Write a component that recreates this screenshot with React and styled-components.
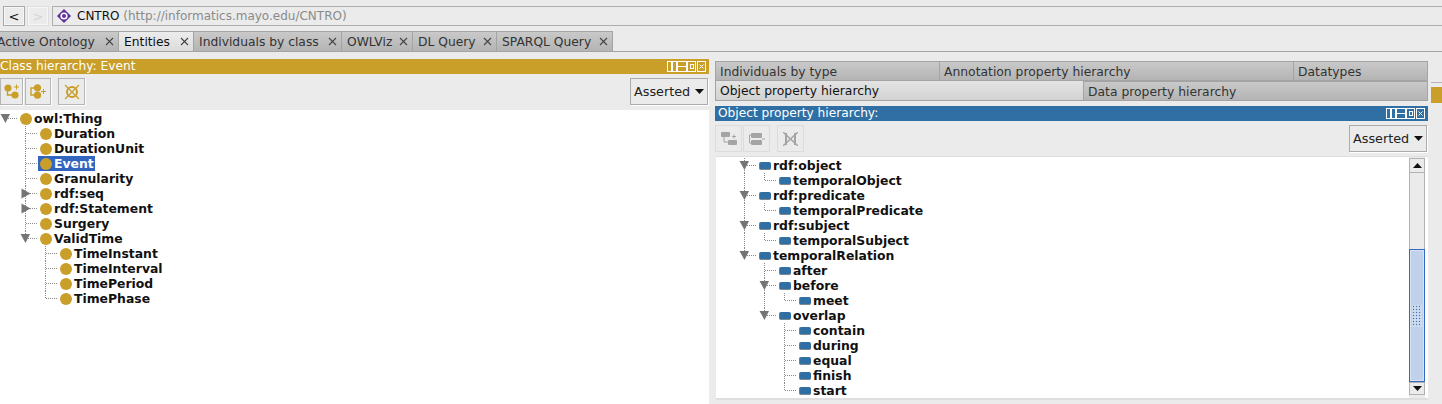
import React from 'react';
import styled, { createGlobalStyle } from 'styled-components';

const GOLD = '#c99e29';
const BLUE = '#2f6fa3';
const FONT = '"DejaVu Sans", sans-serif';

const GlobalStyle = createGlobalStyle`
  html, body {
    margin: 0;
    padding: 0;
    overflow: hidden;
    background: #ebebeb;
  }
`;

const Page = styled.div`
  position: relative;
  width: 1442px;
  height: 404px;
  overflow: hidden;
  background: #ebebeb;
  font-family: ${FONT};
  font-size: 12.3px;
  color: #222;
`;

const NavBar = styled.div`
  display: flex;
  gap: 2px;
  height: 20px;
  padding: 6px 0 5px 3px;
  box-sizing: content-box;
  border-top: 1px solid #dcdcdc;
  margin-top: -1px;
`;

const NavButton = styled.div`
  width: 22px;
  height: 20px;
  box-sizing: border-box;
  border: 1px solid ${p => (p.$disabled ? '#dedede' : '#a9a9a9')};
  box-shadow: inset 0 0 0 1px #f6f6f6;
  display: flex;
  align-items: center;
  justify-content: center;
  font-size: 13px;
  color: ${p => (p.$disabled ? '#d4d4d4' : '#111')};
`;

const AddressBox = styled.div`
  flex: 1;
  margin-left: 1px;
  height: 20px;
  box-sizing: border-box;
  border: 1px solid #aeaeae;
  border-right: none;
  display: flex;
  align-items: center;
  padding-left: 4px;
  gap: 6px;
  font-size: 12px;
  color: #111;
`;

const AddressUrl = styled.span`
  color: #8a8a8a;
`;

const TabBar = styled.div`
  display: flex;
  height: 20px;
  box-sizing: content-box;
  border-bottom: 1px solid #a4a4a4;
  overflow: hidden;
`;

const Tab = styled.div`
  width: ${p => p.$w}px;
  flex: none;
  box-sizing: border-box;
  display: flex;
  align-items: center;
  justify-content: space-between;
  white-space: nowrap;
  padding: 0 4px 0 ${p => (p.$flush ? 0 : 5)}px;
  border: 1px solid #a4a4a4;
  border-left: ${p => (p.$flush ? 'none' : '1px solid #a4a4a4')};
  border-bottom: none;
  margin-left: ${p => (p.$flush ? -3 : 0)}px;
  margin-right: -1px;
  color: ${p => (p.$active ? '#111' : '#333')};
  background: ${p => (p.$active
    ? 'linear-gradient(#ececec, #dcdcdc)'
    : 'linear-gradient(#c9c9c9, #b4b4b4)')};
`;

const Split = styled.div`
  display: grid;
  grid-template-columns: 709px 1fr;
  height: 352px;
`;

const LeftPane = styled.div`
  display: flex;
  flex-direction: column;
  padding-top: 7px;
  min-width: 0;
`;

const RightPane = styled.div`
  display: flex;
  flex-direction: column;
  min-width: 0;
  padding: 9px 14px 7px 6px;
`;

const TabRow = styled.div`
  display: flex;
  flex: none;
  height: 19px;
  box-sizing: content-box;
  border-bottom: 1px solid #a4a4a4;
  margin-bottom: ${p => p.$after || 0}px;
`;

const ViewTab = styled.div`
  flex: none;
  width: ${p => p.$w}px;
  box-sizing: border-box;
  display: flex;
  align-items: center;
  padding: 1px 0 0 4px;
  font-size: 12.35px;
  border-left: 1px solid #a4a4a4;
  border-top: ${p => (p.$active ? 'none' : '1px solid #a4a4a4')};
  border-right: 1px solid #a4a4a4;
  margin-right: -1px;
  color: ${p => (p.$active ? '#111' : '#333')};
  background: ${p => (p.$active
    ? 'linear-gradient(#e4e4e4, #d2d2d2)'
    : 'linear-gradient(#c9c9c9, #b4b4b4)')};
`;

const ViewHeader = styled.div`
  display: flex;
  flex: none;
  align-items: center;
  justify-content: space-between;
  height: 15px;
  padding: 0 3px 0 ${p => p.$inset}px;
  background: ${p => p.$color};
  color: #fff;
  font-size: 12.2px;
  line-height: 17px;
`;

const ViewToolbar = styled.div`
  display: flex;
  flex: none;
  align-items: flex-start;
  height: ${p => p.$h}px;
  padding-top: 4px;
  box-sizing: border-box;
`;

const ToolButton = styled.div`
  width: ${p => p.$w}px;
  height: 27px;
  margin-right: ${p => p.$gap}px;
  box-sizing: border-box;
  border: 1px solid ${p => (p.$disabled ? '#dcdcdc' : '#b5b5b5')};
  box-shadow: 1px 1px 0 ${p => (p.$disabled ? 'transparent' : '#fff')};
  display: flex;
  align-items: center;
  justify-content: center;
`;

const Combo = styled.div`
  margin-left: auto;
  margin-right: 1px;
  width: 78px;
  height: 27px;
  box-sizing: border-box;
  border: 1px solid #ababab;
  box-shadow: 1px 1px 0 #fff;
  display: flex;
  align-items: center;
  justify-content: space-between;
  padding: 0 3px 0 3px;
  font-size: 12.8px;
  color: #222;
`;

const TreeArea = styled.div`
  flex: 1;
  min-height: 0;
  background: #fff;
  overflow: hidden;
  padding-top: ${p => p.$top}px;
  padding-left: ${p => p.$left}px;
`;

const ScrolledPanel = styled.div`
  display: flex;
  flex: 1;
  min-height: 0;
  margin: 0 0 0 1px;
  border-top: 1px solid #dedede;
  border-bottom: 2px solid #dedede;
  background: #fff;
`;

const Scrollbar = styled.div`
  flex: none;
  width: 16px;
  margin-right: 3px;
  padding-top: 1px;
  display: flex;
  flex-direction: column;
  background: #ebebeb;
`;

const ScrollEnd = styled.div`
  flex: none;
  height: ${p => p.$h}px;
  box-sizing: border-box;
  border: 1px solid #b2b2b2;
  display: flex;
  align-items: center;
  justify-content: center;
  background: #ebebeb;
`;

const ScrollTrack = styled.div`
  flex: none;
  height: 76px;
  border-left: 1px solid #b2b2b2;
  border-right: 1px solid #b2b2b2;
`;

const ScrollThumb = styled.div`
  flex: none;
  height: 133px;
  box-sizing: border-box;
  border: 1px solid #3469c2;
  box-shadow: inset 0 0 0 1px #d8e2f2;
  background: #c0d2e9;
  display: flex;
  align-items: center;
  justify-content: center;
`;

const Grip = styled.div`
  width: 10px;
  height: 22px;
  background-image: radial-gradient(#3f72c6 0.7px, transparent 0.8px), radial-gradient(#fff 0.7px, transparent 0.8px);
  background-size: 3px 3px;
  background-position: 0 0, 1.5px 1.5px;
`;

const Row = styled.div`
  display: flex;
  align-items: center;
  height: 15px;
`;

const RowLabel = styled.div`
  display: flex;
  align-items: center;
  height: 15px;
  padding-right: 1px;
  gap: 2px;
  padding-left: 2px;
  background: ${p => (p.$selected ? '#3165bf' : 'transparent')};
  color: ${p => (p.$selected ? '#fff' : '#111')};
  font-weight: 700;
  font-size: 12.4px;
  line-height: 15px;
  white-space: nowrap;
`;

const ClassDot = styled.span`
  flex: none;
  width: 12px;
  height: 12px;
  border-radius: 50%;
  background: ${GOLD};
`;

const PropertyPill = styled.span`
  flex: none;
  width: 12px;
  height: 8px;
  box-sizing: border-box;
  border-radius: 2px;
  background: ${BLUE};
  border-left: 1px solid #6f7d8a;
  border-bottom: 1px solid #7d8790;
`;

const Gutter = styled.svg`
  flex: none;
  display: block;
`;

/* sliver of the next view, cut off by the window edge */
const OuterEdge = styled.div`
  position: absolute;
  left: 1431px;
  top: 82px;
  width: 11px;
  height: 20px;
  border-top: 1px solid #b5b5b5;
  background: linear-gradient(#ebebeb 4px, ${GOLD} 4px);
`;

/* hierarchy data, flattened below so each row knows which guide lines pass through it */
const classTree = [
  {
    label: 'owl:Thing',
    open: true,
    children: [
      { label: 'Duration' },
      { label: 'DurationUnit' },
      { label: 'Event', selected: true },
      { label: 'Granularity' },
      { label: 'rdf:seq', closed: true },
      { label: 'rdf:Statement', closed: true },
      { label: 'Surgery' },
      {
        label: 'ValidTime',
        open: true,
        children: [
          { label: 'TimeInstant' },
          { label: 'TimeInterval' },
          { label: 'TimePeriod' },
          { label: 'TimePhase' },
        ],
      },
    ],
  },
];

const propertyTree = [
  { label: 'rdf:object', open: true, children: [{ label: 'temporalObject' }] },
  { label: 'rdf:predicate', open: true, children: [{ label: 'temporalPredicate' }] },
  { label: 'rdf:subject', open: true, children: [{ label: 'temporalSubject' }] },
  {
    label: 'temporalRelation',
    open: true,
    children: [
      { label: 'after' },
      { label: 'before', open: true, children: [{ label: 'meet' }] },
      {
        label: 'overlap',
        open: true,
        children: [
          { label: 'contain' },
          { label: 'during' },
          { label: 'equal' },
          { label: 'finish' },
          { label: 'start' },
        ],
      },
    ],
  },
];

const flatten = (nodes, depth = 0, passing = []) =>
  nodes.flatMap((node, i) => {
    const last = i === nodes.length - 1;
    const row = { ...node, depth, last, passing };
    const kids = node.children
      ? flatten(node.children, depth + 1, [...passing, ...(last ? [] : [depth])])
      : [];
    return [row, ...kids];
  });

const TreeGuides = ({ row }) => {
  const { depth, last, passing, open, closed } = row;
  const w = 18 + depth * 20;
  const x = 5.5 + depth * 20;
  const dots = { stroke: '#8a8a8a', strokeDasharray: '1 1', shapeRendering: 'crispEdges' };
  return (
    <Gutter width={w} height={15}>
      {passing.map(d => (
        <line key={d} x1={5.5 + d * 20} x2={5.5 + d * 20} y1={0} y2={15} {...dots} />
      ))}
      {depth > 0 && <line x1={x} x2={x} y1={0} y2={last ? 7.5 : 15} {...dots} />}
      {(depth > 0 || open) && <line x1={x} x2={w} y1={7.5} y2={7.5} {...dots} />}
      {open && <polygon points={`${x - 5},3 ${x + 4.5},3 ${x},12`} fill="#757575" />}
      {closed && <polygon points={`${x - 4},2.5 ${x + 5},7.5 ${x - 4},12.5`} fill="#757575" />}
    </Gutter>
  );
};

const Tree = ({ nodes, depth, marker: Marker }) => (
  <>
    {flatten(nodes, depth).map(row => (
      <Row key={row.label}>
        <TreeGuides row={row} />
        <RowLabel $selected={row.selected}>
          <Marker />
          {row.label}
        </RowLabel>
      </Row>
    ))}
  </>
);

const HeaderControls = () => (
  <svg width="39" height="11" fill="none" stroke="#fff" strokeWidth="1" shapeRendering="crispEdges">
    <rect x="0.5" y="0.5" width="9" height="10" strokeWidth="1.4" />
    <line x1="5" x2="5" y1="0" y2="11" strokeWidth="1.4" />
    <rect x="10.5" y="0.5" width="9" height="10" strokeWidth="1.4" />
    <line x1="10" x2="20" y1="5.5" y2="5.5" strokeWidth="1.4" />
    <rect x="20.5" y="0.500" width="8" height="10" strokeWidth="1.4" />
    <rect x="23.5" y="3.500" width="3" height="4" />
    <rect x="30.5" y="0.500" width="8" height="10" />
    <path d="M32.500 3.500l4 4M36.500 3.500l-4 4" shapeRendering="auto" />
  </svg>
);

const TabCloseIcon = () => (
  <svg width="9" height="9" viewBox="0 0 9 9">
    <path d="M1 1l7 7M8 1L1 8" stroke="#444" strokeWidth="1.1" />
  </svg>
);

const AddChildIcon = ({ color }) => (
  <svg width="16" height="15" viewBox="0 0 16 15">
    <circle cx="4" cy="4" r="3.600" fill={color} />
    <circle cx="11" cy="11" r="3.600" fill={color} />
    <path d="M3.500 7v4H8" fill="none" stroke={color} strokeWidth="1.4" />
    <path d="M10 3h5M12.500 .5v5" stroke={color} strokeWidth="1" />
  </svg>
);

const AddSiblingIcon = ({ color }) => (
  <svg width="16" height="15" viewBox="0 0 16 15">
    <circle cx="7.500" cy="3.800" r="3.600" fill={color} />
    <circle cx="7.500" cy="11.200" r="3.600" fill={color} />
    <path d="M5 4H1v7h4" fill="none" stroke={color} strokeWidth="1.4" />
    <path d="M11 7.500h5M13.500 5v5" stroke={color} strokeWidth="1" />
  </svg>
);

const DeleteIcon = ({ color }) => (
  <svg width="16" height="16" viewBox="0 0 16 16">
    <circle cx="8" cy="8" r="5" fill="none" stroke={color} strokeWidth="2" />
    <path d="M1 1l14 14M15 1L1 15" stroke={color} strokeWidth="1.3" />
  </svg>
);

const AddChildProperty = ({ color }) => (
  <svg width="16" height="13" viewBox="0 0 16 13">
    <rect x="0" y="0" width="9" height="5" rx="1" fill={color} />
    <rect x="7" y="8" width="9" height="5" rx="1" fill={color} />
    <path d="M3 5v5h4" fill="none" stroke={color} />
    <path d="M11 4.500h4M13 2.500v4" stroke={color} />
  </svg>
);

const AddSiblingProperty = ({ color }) => (
  <svg width="16" height="12" viewBox="0 0 16 12">
    <rect x="2" y="0" width="11" height="5" rx="1" fill={color} />
    <rect x="2" y="7" width="11" height="5" rx="1" fill={color} />
    <path d="M2 2H0.500v8H2" fill="none" stroke={color} />
    <path d="M13 6h3" stroke={color} />
  </svg>
);

const DeleteProperty = ({ color }) => (
  <svg width="15" height="14" viewBox="0 0 15 14">
    <path d="M3 1v12M12 1v12" stroke={color} strokeWidth="2" />
    <path d="M0 0l15 14M15 0L0 14" stroke={color} strokeWidth="1.4" />
  </svg>
);

const ComboArrow = () => (
  <svg width="9" height="5">
    <polygon points="0,0 9,0 4.500,5" fill="#111" />
  </svg>
);

const Logo = () => (
  <svg width="14" height="14" viewBox="0 0 14 14">
    <polygon points="7,0 14,7 7,14 0,7" fill="#5f2f9c" />
    <circle cx="7" cy="7" r="3.600" fill="#fff" />
    <circle cx="7" cy="7" r="2" fill="#5f2f9c" />
  </svg>
);

const topTabs = [
  { label: 'Active Ontology', w: 122, flush: true },
  { label: 'Entities', w: 76, active: true },
  { label: 'Individuals by class', w: 149 },
  { label: 'OWLViz', w: 72 },
  { label: 'DL Query', w: 85 },
  { label: 'SPARQL Query', w: 117 },
];

const App = () => (
  <Page>
    <GlobalStyle />
    <NavBar>
      <NavButton>&lt;</NavButton>
      <NavButton $disabled>&gt;</NavButton>
      <AddressBox>
        <Logo />
        <span>
          CNTRO <AddressUrl>(http://informatics.mayo.edu/CNTRO)</AddressUrl>
        </span>
      </AddressBox>
    </NavBar>
    <TabBar>
      {topTabs.map(t => (
        <Tab key={t.label} $w={t.w} $active={t.active} $flush={t.flush}>
          {t.label}
          <TabCloseIcon />
        </Tab>
      ))}
    </TabBar>
    <Split>
      <LeftPane>
        <ViewHeader $color={GOLD} $inset={0}>
          Class hierarchy: Event
          <HeaderControls />
        </ViewHeader>
        <ViewToolbar $h={36}>
          <ToolButton $w={23} $gap={2}><AddChildIcon color={GOLD} /></ToolButton>
          <ToolButton $w={26} $gap={7}><AddSiblingIcon color={GOLD} /></ToolButton>
          <ToolButton $w={27} $gap={0}><DeleteIcon color={GOLD} /></ToolButton>
          <Combo>Asserted<ComboArrow /></Combo>
        </ViewToolbar>
        <TreeArea $top={1} $left={0}>
          <Tree nodes={classTree} depth={0} marker={ClassDot} />
        </TreeArea>
      </LeftPane>
      <RightPane>
        <TabRow>
          <ViewTab $w={225}>Individuals by type</ViewTab>
          <ViewTab $w={355}>Annotation property hierarchy</ViewTab>
          <ViewTab $w={135}>Datatypes</ViewTab>
        </TabRow>
        <TabRow $after={5}>
          <ViewTab $w={369} $active>Object property hierarchy</ViewTab>
          <ViewTab $w={345}>Data property hierarchy</ViewTab>
        </TabRow>
        <ViewHeader $color={BLUE} $inset={3}>
          Object property hierarchy:
          <HeaderControls />
        </ViewHeader>
        <ViewToolbar $h={35}>
          <ToolButton $w={27} $gap={1} $disabled><AddChildProperty color="#a4a4a4" /></ToolButton>
          <ToolButton $w={27} $gap={7} $disabled><AddSiblingProperty color="#a4a4a4" /></ToolButton>
          <ToolButton $w={27} $gap={0} $disabled><DeleteProperty color="#a4a4a4" /></ToolButton>
          <Combo>Asserted<ComboArrow /></Combo>
        </ViewToolbar>
        <ScrolledPanel>
          <TreeArea $top={1} $left={3}>
            <Tree nodes={propertyTree} depth={1} marker={PropertyPill} />
          </TreeArea>
          <Scrollbar>
            <ScrollEnd $h={15}>
              <svg width="9" height="5"><polygon points="4.500,0 9,5 0,5" fill="#111" /></svg>
            </ScrollEnd>
            <ScrollTrack />
            <ScrollThumb><Grip /></ScrollThumb>
            <ScrollEnd $h={13}><ComboArrow /></ScrollEnd>
          </Scrollbar>
        </ScrolledPanel>
      </RightPane>
    </Split>
    <OuterEdge />
  </Page>
);

export default App;
